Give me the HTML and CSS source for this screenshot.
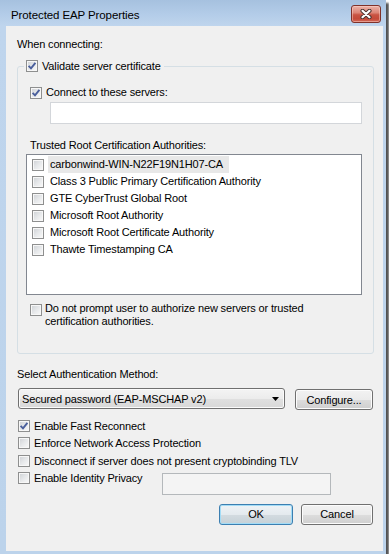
FILE: index.html
```html
<!DOCTYPE html>
<html>
<head>
<meta charset="utf-8">
<title>Protected EAP Properties</title>
<link rel="stylesheet" href="styles.css">
</head>
<body>
<div class="window">
  <div class="titlebar">
    <span class="title">Protected EAP Properties</span>
    <span class="close">
      <svg width="14" height="10" viewBox="0 0 14 10"><path d="M3.5 1.8 L10.5 8.2 M10.5 1.8 L3.5 8.2" stroke="#4a3431" stroke-width="4.2" stroke-linecap="round" fill="none"/><path d="M3.5 1.8 L10.5 8.2 M10.5 1.8 L3.5 8.2" stroke="#ffffff" stroke-width="2.2" stroke-linecap="round" fill="none"/></svg>
    </span>
  </div>
  <div class="client">
    <div class="text">When connecting:</div>
    <fieldset class="group">
      <legend class="legend"><span class="cb"><svg class="tick" width="10" height="10" viewBox="0 0 10 10"><path d="M1.6 4.8 L4 7.4 L8.4 1.8" stroke="#4a5f9c" stroke-width="1.9" fill="none"/></svg></span><span>Validate server certificate</span></legend>
      <div class="row indent"><span class="cb"><svg class="tick" width="10" height="10" viewBox="0 0 10 10"><path d="M1.6 4.8 L4 7.4 L8.4 1.8" stroke="#4a5f9c" stroke-width="1.9" fill="none"/></svg></span><span>Connect to these servers:</span></div>
      <div class="textbox servers"></div>
      <div class="text indent trusted">Trusted Root Certification Authorities:</div>
      <div class="list">
        <div class="item"><span class="cb"></span><span class="item-text sel">carbonwind-WIN-N22F19N1H07-CA</span></div>
        <div class="item"><span class="cb"></span><span class="item-text">Class 3 Public Primary Certification Authority</span></div>
        <div class="item"><span class="cb"></span><span class="item-text">GTE CyberTrust Global Root</span></div>
        <div class="item"><span class="cb"></span><span class="item-text">Microsoft Root Authority</span></div>
        <div class="item"><span class="cb"></span><span class="item-text">Microsoft Root Certificate Authority</span></div>
        <div class="item"><span class="cb"></span><span class="item-text">Thawte Timestamping CA</span></div>
      </div>
      <div class="row wrap indent"><span class="cb"></span><span class="wrap-text">Do not prompt user to authorize new servers or trusted certification authorities.</span></div>
    </fieldset>
    <div class="text method-label">Select Authentication Method:</div>
    <div class="method-row">
      <div class="combo"><span>Secured password (EAP-MSCHAP v2)</span><svg width="7" height="4" viewBox="0 0 7 4"><path d="M0 0 H7 L3.5 4 Z" fill="#000"/></svg></div>
      <div class="btn configure">Configure...</div>
    </div>
    <div class="options">
      <div class="opt"><span class="cb"><svg class="tick" width="10" height="10" viewBox="0 0 10 10"><path d="M1.6 4.8 L4 7.4 L8.4 1.8" stroke="#4a5f9c" stroke-width="1.9" fill="none"/></svg></span><span>Enable Fast Reconnect</span></div>
      <div class="opt"><span class="cb"></span><span>Enforce Network Access Protection</span></div>
      <div class="opt"><span class="cb"></span><span>Disconnect if server does not present cryptobinding TLV</span></div>
      <div class="opt last"><div class="opt-label"><span class="cb"></span><span>Enable Identity Privacy</span></div><div class="textbox identity"></div></div>
    </div>
    <div class="actions">
      <div class="btn ok">OK</div>
      <div class="btn cancel">Cancel</div>
    </div>
  </div>
</div>
</body>
</html>
```
FILE: styles.css
```css
html, body {
  margin: 0;
  padding: 0;
  background: #ffffff;
}
body {
  font-family: "Liberation Sans", Arial, sans-serif;
  font-size: 11px;
  letter-spacing: -0.15px;
  color: #000;
}
.window {
  width: 386px;
  height: 554px;
  background: linear-gradient(to bottom, #a6c1df 0px, #b3cce8 14px, #bfd5ed 26px, #bcd3eb 100%);
  box-shadow: 3px 3px 2px rgba(0, 0, 0, 0.68);
}
.titlebar {
  height: 26px;
  box-sizing: border-box;
  display: flex;
  align-items: flex-start;
  justify-content: space-between;
  padding: 0 5px 0 11px;
}
.title {
  font-size: 11.5px;
  letter-spacing: -0.1px;
  line-height: 16px;
  margin-top: 7px;
  color: #000;
}
.close {
  margin-top: 5px;
  width: 30px;
  height: 18px;
  box-sizing: border-box;
  border: 1px solid #7f3129;
  border-radius: 3px;
  background: linear-gradient(to bottom, #ebb2a8 0%, #dc8576 42%, #c95443 55%, #c44a39 80%, #d36a5a 100%);
  box-shadow: inset 0 0 0 1px rgba(255, 220, 210, 0.45);
  display: flex;
  align-items: center;
  justify-content: center;
}
.client {
  margin-left: 6px;
  width: 377px;
  height: 525px;
  box-sizing: border-box;
  background: #f0f0f0;
  padding: 10px 9px 0 11px;
}
.text {
  line-height: 16px;
}
.indent {
  margin-left: 4px;
}
.cb {
  flex: none;
  width: 12px;
  height: 12px;
  box-sizing: border-box;
  border: 1px solid #8e8f8f;
  background: linear-gradient(135deg, #cdd0d4 0%, #e6e8ea 50%, #fafafa 100%);
  box-shadow: inset 0 0 0 1px #f7f7f7;
  display: flex;
  align-items: center;
  justify-content: center;
}
.tick {
  display: block;
}
.group {
  margin: 6px 0 0 0;
  padding: 10px 11px 25px 8px;
  border: 1px solid #d5dfe5;
  border-radius: 3px;
  min-inline-size: 0;
}
.legend {
  margin-left: -2px;
  padding: 0 3px 0 2px;
  display: flex;
  align-items: center;
  gap: 4px;
  line-height: 16px;
  height: 16px;
}
.row {
  display: flex;
  align-items: center;
  gap: 4px;
  height: 17px;
  line-height: 17px;
}
.textbox {
  box-sizing: border-box;
  background: #fff;
  border: 1px solid #d3d6da;
}
.servers {
  margin: 1px 0 0 24px;
  height: 22px;
}
.trusted {
  margin-top: 13px;
}
.list {
  margin-top: 1px;
  height: 141px;
  box-sizing: border-box;
  border: 1px solid #828790;
  background: #fff;
  padding-top: 1px;
}
.item {
  display: flex;
  align-items: center;
  height: 17px;
  padding-left: 5px;
}
.item-text {
  margin-left: 4px;
  padding: 0 6px 0 2px;
  line-height: 17px;
  height: 17px;
}
.item-text.sel {
  background: #e8e8e8;
}
.row.wrap {
  margin-top: 7px;
  height: auto;
  align-items: flex-start;
  gap: 3px;
  line-height: 13px;
}
.row.wrap .cb {
  margin-top: 2px;
}
.wrap-text {
  max-width: 285px;
}
.method-label {
  margin-top: 12px;
}
.method-row {
  display: flex;
  align-items: flex-start;
  margin: 6px 1px 0 1px;
}
.combo {
  width: 267px;
  height: 21px;
  box-sizing: border-box;
  border: 1px solid #707070;
  border-radius: 3px;
  background: linear-gradient(to bottom, #f4f4f4 0%, #ececec 50%, #e0e0e0 51%, #d8d8d8 100%);
  box-shadow: inset 0 0 0 1px #fbfbfb;
  display: flex;
  align-items: center;
  justify-content: space-between;
  padding: 0 5px 0 3px;
}
.btn {
  height: 21px;
  box-sizing: border-box;
  border: 1px solid #707070;
  border-radius: 3px;
  background: linear-gradient(to bottom, #f2f2f2 0%, #ebebeb 50%, #dddddd 51%, #cfcfcf 100%);
  box-shadow: inset 0 0 0 1px #fcfcfc;
  display: flex;
  align-items: center;
  justify-content: center;
}
.configure {
  width: 78px;
  margin-top: 1px;
  margin-left: auto;
}
.options {
  margin-top: 7px;
}
.opt {
  display: flex;
  align-items: center;
  gap: 4px;
  height: 17.5px;
  padding-left: 1px;
}
.opt.last {
  height: auto;
  align-items: flex-start;
  gap: 0;
}
.opt-label {
  width: 144px;
  height: 17.5px;
  display: flex;
  align-items: center;
  gap: 4px;
}
.identity {
  width: 169px;
  height: 22px;
  margin-top: 3px;
  background: #f4f4f4;
  border-color: #b4b8bb;
}
.actions {
  display: flex;
  justify-content: flex-end;
  gap: 8px;
  margin: 9px 1px 0 0;
}
.ok {
  width: 74px;
  border-color: #3c7fb1;
  box-shadow: inset 0 0 0 1px #a3dcf6;
  background: linear-gradient(to bottom, #eef3f6 0%, #e4eaee 50%, #d3dbe0 51%, #c6d1d7 100%);
}
.cancel {
  width: 72px;
}
```
